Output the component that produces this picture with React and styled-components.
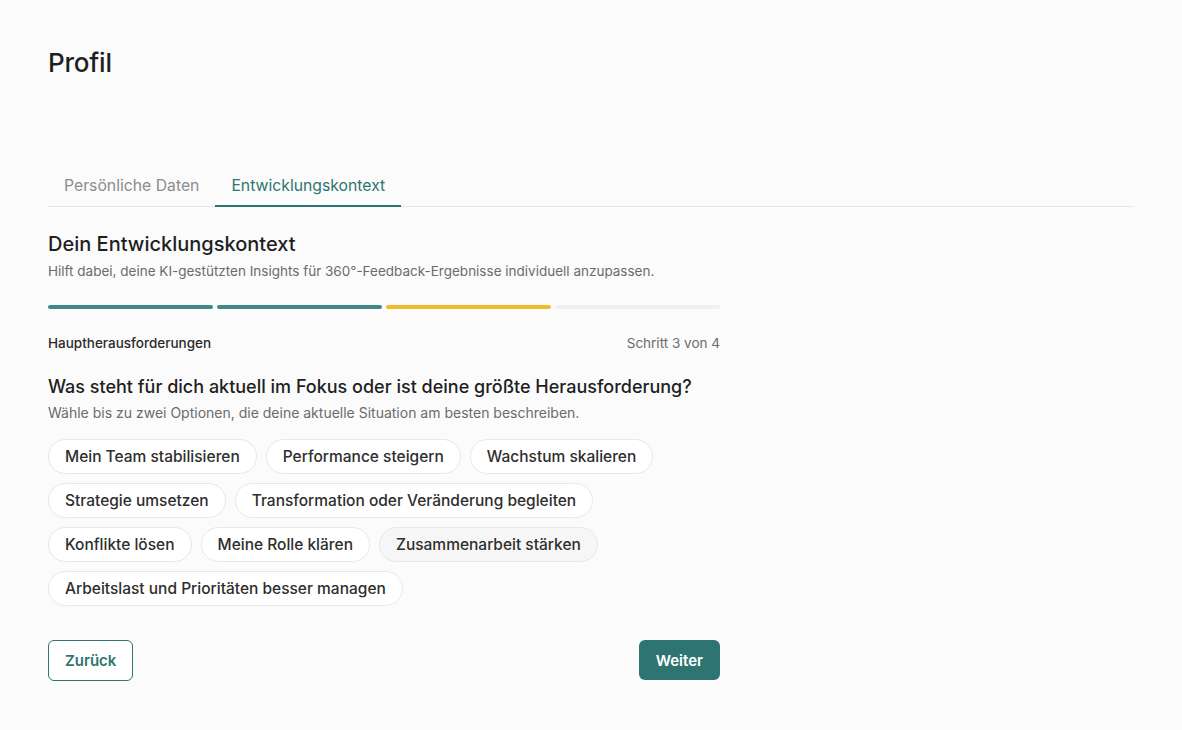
import React, { useState } from 'react';
import styled, { createGlobalStyle } from 'styled-components';

const GlobalStyle = createGlobalStyle`
  body {
    margin: 0;
    background: #fbfbfb;
    font-family: Inter, 'Liberation Sans', sans-serif;
    color: #1f1f1f;
  }
`

const Page = styled.div`
  padding: 48px 48px 40px 48px;
  max-width: 1085px;
`

const Title = styled.h1`
  font-size: 26px;
  font-weight: 500;
  margin: 0;
  line-height: 30px;
  letter-spacing: -0.2px;
`

const TabBar = styled.div`
  display: flex;
  margin-top: 98px;
  border-bottom: 1px solid #e6e6e6;
`

const Tab = styled.button`
  background: none;
  border: none;
  font-family: inherit;
  font-size: 15.75px;
  line-height: 19px;
  padding: 0 16px 10px 16px;
  margin-bottom: -1px;
  color: ${p => p.active ? '#2e7571' : '#8c8c8c'};
  border-bottom: 2px solid ${p => p.active ? '#2e7571' : 'transparent'};
  cursor: pointer;
`

const Content = styled.div`
  width: 672px;
  padding-top: 25px;
`

const Heading = styled.h2`
  font-size: 20px;
  font-weight: 500;
  margin: 0;
  line-height: 24px;
`

const Sub = styled.p`
  font-size: ${p => p.size || 13.5}px;
  color: #6b6b6b;
  margin: ${p => p.top || 6}px 0 0 0;
  line-height: 18px;
`

const Progress = styled.div`
  display: grid;
  grid-template-columns: repeat(4, 1fr);
  gap: 4px;
  margin-top: 25px;
`

const Segment = styled.div`
  height: 4px;
  border-radius: 2px;
  background: ${p => p.color};
`

const StepRow = styled.div`
  display: flex;
  justify-content: space-between;
  align-items: center;
  margin-top: 26px;
  font-size: 13.5px;
`

const StepLabel = styled.span`
  font-weight: 500;
  color: #2a2a2a;
`

const StepCount = styled.span`
  color: #6b6b6b;
`

const Question = styled.h3`
  font-size: 18px;
  font-weight: 500;
  margin: 24px 0 0 0;
  line-height: 24px;
`

const Chips = styled.div`
  display: flex;
  flex-wrap: wrap;
  gap: 9px;
  margin-top: 17px;
`

const Chip = styled.button`
  height: 35px;
  padding: 0 16px;
  border-radius: 18px;
  border: 1px solid #e8e8e8;
  background: ${p => p.hover ? '#f6f6f6' : '#ffffff'};
  font-family: inherit;
  font-size: 15.5px;
  font-weight: 500;
  color: #2e2e2e;
  cursor: pointer;
`

const Actions = styled.div`
  display: flex;
  justify-content: space-between;
  margin-top: 34px;
`

const OutlineButton = styled.button`
  height: 41px;
  padding: 0 16px;
  border-radius: 6px;
  border: 1px solid #2e7571;
  background: #ffffff;
  color: #2e7571;
  font-family: inherit;
  font-size: 15px;
  font-weight: 600;
  cursor: pointer;
`

const PrimaryButton = styled.button`
  height: 40px;
  padding: 0 17px;
  border-radius: 6px;
  border: none;
  background: #2e7571;
  color: #ffffff;
  font-family: inherit;
  font-size: 15px;
  font-weight: 600;
  cursor: pointer;
`

const options = [
  'Mein Team stabilisieren',
  'Performance steigern',
  'Wachstum skalieren',
  'Strategie umsetzen',
  'Transformation oder Veränderung begleiten',
  'Konflikte lösen',
  'Meine Rolle klären',
  'Zusammenarbeit stärken',
  'Arbeitslast und Prioritäten besser managen',
]

const segments = ['#3f8a87', '#3f8a87', '#f2bb2a', '#f0f0f0']

export default function App() {
  const [tab, setTab] = useState(1)

  return (
    <Page>
      <GlobalStyle />
      <Title>Profil</Title>
      <TabBar>
        <Tab active={tab === 0} onClick={() => setTab(0)}>Persönliche Daten</Tab>
        <Tab active={tab === 1} onClick={() => setTab(1)}>Entwicklungskontext</Tab>
      </TabBar>
      <Content>
        <Heading>Dein Entwicklungskontext</Heading>
        <Sub>Hilft dabei, deine KI-gestützten Insights für 360°-Feedback-Ergebnisse individuell anzupassen.</Sub>
        <Progress>
          {segments.map((c, i) => <Segment key={i} color={c} />)}
        </Progress>
        <StepRow>
          <StepLabel>Hauptherausforderungen</StepLabel>
          <StepCount>Schritt 3 von 4</StepCount>
        </StepRow>
        <Question>Was steht für dich aktuell im Fokus oder ist deine größte Herausforderung?</Question>
        <Sub top={5} size={14}>Wähle bis zu zwei Optionen, die deine aktuelle Situation am besten beschreiben.</Sub>
        <Chips>
          {options.map(o => (
            <Chip key={o} hover={o === 'Zusammenarbeit stärken'}>{o}</Chip>
          ))}
        </Chips>
        <Actions>
          <OutlineButton>Zurück</OutlineButton>
          <PrimaryButton>Weiter</PrimaryButton>
        </Actions>
      </Content>
    </Page>
  )
}
